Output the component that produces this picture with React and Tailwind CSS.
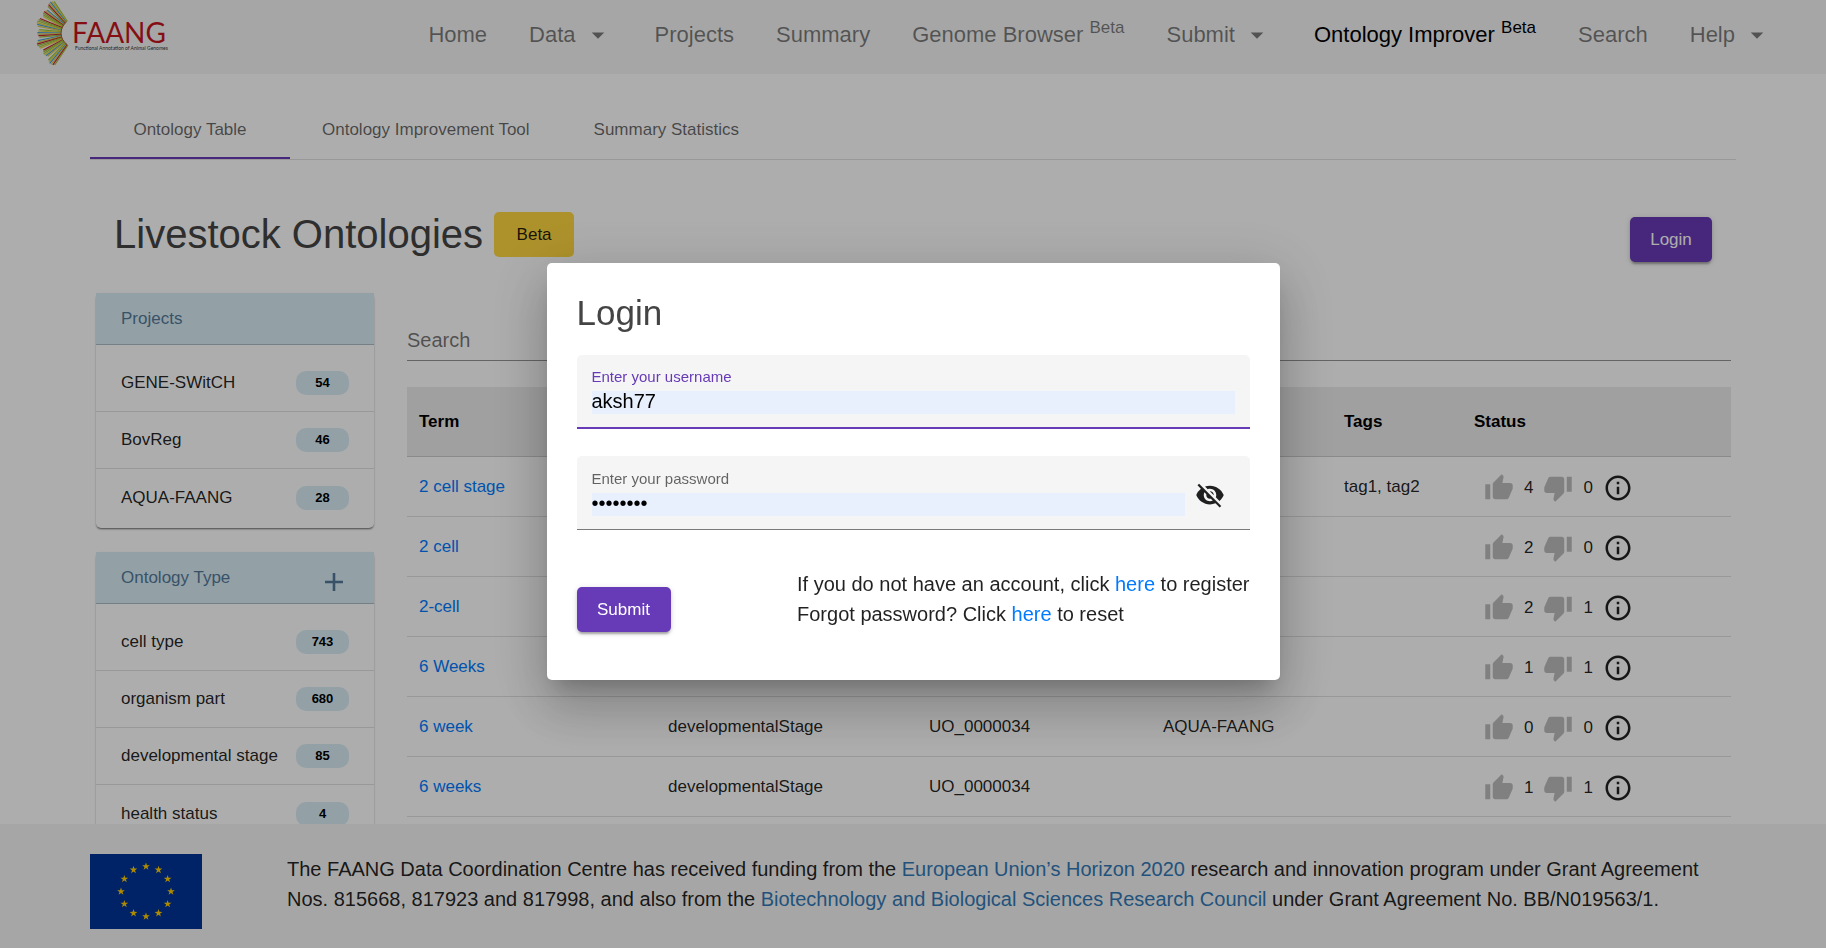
import { MdThumbUp, MdThumbDown, MdInfoOutline, MdVisibilityOff, MdArrowDropDown } from "react-icons/md";

const NAV = [
  { label: "Home" },
  { label: "Data", menu: true },
  { label: "Projects" },
  { label: "Summary" },
  { label: "Genome Browser", beta: true },
  { label: "Submit", menu: true },
  { label: "Ontology Improver", beta: true, active: true },
  { label: "Search" },
  { label: "Help", menu: true },
];

const PROJECTS = [["GENE-SWitCH", 54], ["BovReg", 46], ["AQUA-FAANG", 28]];
const TYPES = [["cell type", 743], ["organism part", 680], ["developmental stage", 85], ["health status", 4]];

const ROWS = [
  { term: "2 cell stage", tags: "tag1, tag2", up: 4, down: 0 },
  { term: "2 cell", up: 2, down: 0 },
  { term: "2-cell", up: 2, down: 1 },
  { term: "6 Weeks", up: 1, down: 1 },
  { term: "6 week", type: "developmentalStage", id: "UO_0000034", project: "AQUA-FAANG", up: 0, down: 0 },
  { term: "6 weeks", type: "developmentalStage", id: "UO_0000034", up: 1, down: 1 },
];

const RAY_COLORS = ["#9cc53f", "#e0cf3a", "#4a9fd0", "#d8c850", "#c2272d", "#a3b53a"];
const FAN = { cx: 39, cy: 33, inner: 14, wedges: 7, perWedge: 6, from: 122, to: 241 };

// Seven tufts of six rays each, opening to the left around a common centre.
const RAYS = Array.from({ length: FAN.wedges * FAN.perWedge }, (_, i) => {
  const wedge = Math.floor(i / FAN.perWedge);
  const k = i % FAN.perWedge;
  const span = (FAN.to - FAN.from) / FAN.wedges;
  const mid = FAN.from + span * (wedge + 0.5);
  const offset = (k - 2.5) / FAN.perWedge;
  const innerAngle = ((mid + offset * span) * Math.PI) / 180;
  const outerAngle = ((mid + offset * span * 0.85 - 1) * Math.PI) / 180;
  const outer = 40 - Math.abs(offset) * 5 - (wedge % 2) * 2;
  return {
    x1: FAN.cx + FAN.inner * Math.cos(innerAngle),
    y1: FAN.cy - FAN.inner * Math.sin(innerAngle),
    x2: FAN.cx + outer * Math.cos(outerAngle),
    y2: FAN.cy - outer * Math.sin(outerAngle),
    color: RAY_COLORS[(k + wedge * 2) % RAY_COLORS.length],
  };
});

function Logo() {
  return (
    <a href="#home" aria-label="FAANG home" className="shrink-0">
      <svg width="140" height="68" viewBox="0 0 140 68">
        {RAYS.map((r, i) => (
          <line key={i} x1={r.x1} y1={r.y1} x2={r.x2} y2={r.y2} stroke={r.color} strokeWidth="1.2" />
        ))}
        <path d="M30.5 22A14 14 0 0 0 31 44.5" fill="none" stroke="#9a5a2a" strokeWidth="1" />
        <text x="36" y="43" fontFamily="Lato, sans-serif" fontSize="28" fill="#c4161f">FAANG</text>
        <text x="39" y="50" fontFamily="Lato, sans-serif" fontSize="5" fill="#333">Functional Annotation of Animal Genomes</text>
      </svg>
    </a>
  );
}

function Header() {
  return (
    <header className="flex h-[74px] shrink-0 items-start bg-[#f5f5f5] pl-9">
      <Logo />
      <nav className="ml-auto flex h-[69px] items-center gap-[42px] pr-[54px] text-[22px] leading-[30px] text-black/50">
        {NAV.map((n) => (
          <a key={n.label} href={"#" + n.label} className={n.active ? "flex items-center whitespace-nowrap text-black" : "flex items-center whitespace-nowrap"}>
            <span>
              {n.label}
              {n.beta && <> <sup className="text-[17px]">Beta</sup></>}
            </span>
            {n.menu && <MdArrowDropDown className="ml-[7px] size-[30px]" />}
          </a>
        ))}
      </nav>
    </header>
  );
}

function Tabs() {
  const base = "flex h-[59px] min-w-[200px] items-center justify-center border-b-2 px-8 pt-0.5 ";
  return (
    <div role="tablist" className="flex h-[60px] border-b border-black/12 text-[17px] text-black/60">
      <button role="tab" aria-selected="true" className={base + "border-[#673ab7]"}>Ontology Table</button>
      <button role="tab" aria-selected="false" className={base + "border-transparent"}>Ontology Improvement Tool</button>
      <button role="tab" aria-selected="false" className={base + "border-transparent"}>Summary Statistics</button>
    </div>
  );
}

function FilterCard({ title, items, expandable }) {
  return (
    <section className="rounded-[5px] pb-0.5 shadow-[0_2px_2px_-1px_rgba(0,0,0,0.4),0_1px_2px_rgba(0,0,0,0.25)]">
      <div className="flex h-[52px] items-center justify-between border-b border-black/20 bg-[#d9edf7] px-[25px] text-[17px] text-[#557a99]">
        <h2>{title}</h2>
        {expandable && (
          <button aria-label={"Show all of " + title} className="mt-2 mr-1.5">
            <svg width="18" height="18" viewBox="0 0 18 18" stroke="currentColor" strokeWidth="2.6">
              <path d="M9 0v18M0 9h18" />
            </svg>
          </button>
        )}
      </div>
      <ul className="pt-2.5">
        {items.map(([name, count]) => (
          <li key={name} className="flex h-[57px] items-center justify-between border-b border-black/12 px-[25px] text-[17px] text-black/87 last:border-b-0">
            <span className="whitespace-nowrap">{name}</span>
            <span className="flex h-6 w-[53px] items-center justify-center rounded-[10px] bg-[#d9edf7] text-[13px] font-bold text-black">{count}</span>
          </li>
        ))}
      </ul>
    </section>
  );
}

function OntologyTable() {
  return (
    <table className="w-full table-fixed border-collapse text-left text-[17px] text-black/87">
      <colgroup>
        <col className="w-[249px]" />
        <col className="w-[261px]" />
        <col className="w-[234px]" />
        <col className="w-[181px]" />
        <col className="w-[130px]" />
        <col />
      </colgroup>
      <thead>
        <tr className="h-[69px] border-b border-black/20 bg-[#ececec] text-black">
          <th className="px-3">Term</th>
          <th className="px-3"></th>
          <th className="px-3"></th>
          <th className="px-3"></th>
          <th className="px-3">Tags</th>
          <th className="px-3">Status</th>
        </tr>
      </thead>
      <tbody>
        {ROWS.map((r) => (
          <tr key={r.term} className="h-[60px] border-b border-black/12">
            <td className="px-3 pt-0.5"><a href="#term" className="text-[#007bff]">{r.term}</a></td>
            <td className="px-3 pt-0.5">{r.type}</td>
            <td className="px-3 pt-0.5">{r.id}</td>
            <td className="px-3 pt-0.5">{r.project}</td>
            <td className="px-3 pt-0.5 whitespace-nowrap">{r.tags}</td>
            <td className="px-3 pt-1">
              <div className="flex items-center gap-2.5 pl-2.5">
                <button aria-label="Upvote" className="text-black/26"><MdThumbUp className="size-[30px]" /></button>
                <span>{r.up}</span>
                <button aria-label="Downvote" className="text-black/26"><MdThumbDown className="size-[30px]" /></button>
                <span>{r.down}</span>
                <button aria-label="Details"><MdInfoOutline className="size-[30px]" /></button>
              </div>
            </td>
          </tr>
        ))}
      </tbody>
    </table>
  );
}

function EuFlag() {
  const star = Array.from({ length: 10 }, (_, i) => {
    const rad = i % 2 ? 1.6 : 4.1;
    const a = (i * Math.PI) / 5;
    return (rad * Math.sin(a)).toFixed(2) + "," + (-rad * Math.cos(a)).toFixed(2);
  }).join(" ");
  return (
    <svg role="img" aria-label="European Union flag" width="112" height="75" viewBox="0 0 112 75" className="shrink-0">
      <rect width="112" height="75" fill="#003399" />
      {Array.from({ length: 12 }, (_, i) => {
        const a = (i * Math.PI) / 6;
        return <polygon key={i} points={star} fill="#ffcc00" transform={`translate(${56 + 25 * Math.sin(a)} ${37.5 - 25 * Math.cos(a)})`} />;
      })}
    </svg>
  );
}

function Footer() {
  return (
    <footer className="flex h-[124px] shrink-0 items-start gap-[85px] bg-[#f5f5f5] px-[90px] pt-[30px] text-[20px] leading-[30px] text-black/87">
      <EuFlag />
      <p>
        The FAANG Data Coordination Centre has received funding from the{" "}
        <a href="#h2020" className="text-[#337ab7]">European Union’s Horizon 2020</a> research and innovation program under Grant Agreement Nos. 815668, 817923 and 817998, and also from the{" "}
        <a href="#bbsrc" className="text-[#337ab7]">Biotechnology and Biological Sciences Research Council</a> under Grant Agreement No. BB/N019563/1.
      </p>
    </footer>
  );
}

const RAISED = "rounded-[5px] bg-[#673ab7] text-[17px] text-white h-[45px] shadow-[0_4px_2px_-2px_rgba(0,0,0,0.2),0_2px_3px_rgba(0,0,0,0.14),0_1px_6px_rgba(0,0,0,0.12)]";

function LoginDialog() {
  return (
    <div className="fixed inset-0 flex items-center justify-center bg-black/32 pb-[5px]">
      <form
        role="dialog"
        aria-labelledby="login-title"
        onSubmit={(e) => e.preventDefault()}
        className="w-[733px] rounded-[5px] bg-white px-[30px] pt-[30px] pb-12 shadow-[0_14px_19px_-9px_rgba(0,0,0,0.2),0_30px_48px_4px_rgba(0,0,0,0.14),0_11px_58px_10px_rgba(0,0,0,0.12)]"
      >
        <h2 id="login-title" className="text-[35px] leading-10 text-[#444]">Login</h2>
        <div className="mt-[22px] rounded-t-[5px] border-b-2 border-[#673ab7] bg-[#f5f5f5] px-[15px] py-[13px]">
          <label htmlFor="user" className="block text-[15px] leading-[18px] text-[#673ab7]">Enter your username</label>
          <input id="user" type="text" defaultValue="aksh77" className="mt-[5px] block h-[23px] w-full bg-[#e8f0fe] pb-0.5 text-[20px] leading-[21px] text-black outline-none" />
        </div>
        <div className="mt-[27px] flex items-center rounded-t-[5px] border-b border-black/50 bg-[#f5f5f5] px-[15px] pt-[14px] pb-[13px]">
          <div className="flex-1">
            <label htmlFor="pass" className="block text-[15px] leading-[18px] text-black/60">Enter your password</label>
            <input id="pass" type="password" defaultValue="password" className="mt-[5px] block h-[23px] w-full bg-[#e8f0fe] pb-0.5 text-[20px] leading-[21px] text-black outline-none" />
          </div>
          <button type="button" aria-label="Show password" className="mr-2.5 ml-2.5 pt-1 text-black/87"><MdVisibilityOff className="size-[30px]" /></button>
        </div>
        <div className="mt-[39px] flex items-end justify-between text-[20px] leading-[30px] text-black/87">
          <button type="submit" className={RAISED + " mt-[18px] w-[94px]"}>Submit</button>
          <div className="self-start">
            <p>If you do not have an account, click <a href="#register" className="text-[#007bff]">here</a> to register</p>
            <p>Forgot password? Click <a href="#reset" className="text-[#007bff]">here</a> to reset</p>
          </div>
        </div>
      </form>
    </div>
  );
}

export default function App() {
  return (
    <div className="flex h-screen flex-col overflow-hidden bg-white font-['Liberation_Sans',Arial,sans-serif]">
      <Header />
      <main className="min-h-0 flex-1 overflow-hidden px-[90px] pt-[26px]">
        <Tabs />
        <div className="mt-[52px] flex items-start pr-6 pl-6">
          <h1 className="text-[40px] leading-[45px] text-[#444]">Livestock Ontologies</h1>
          <button className="ml-[11px] h-[45px] w-20 rounded-[5px] bg-[#ffd740] text-[17px] text-black/87">Beta</button>
          <button className={RAISED + " mt-[5px] ml-auto w-[82px]"}>Login</button>
        </div>
        <div className="mt-[31px] flex items-start gap-[33px] pr-[5px] pl-1.5">
          <aside className="flex w-[278px] shrink-0 flex-col gap-6">
            <FilterCard title="Projects" items={PROJECTS} />
            <FilterCard title="Ontology Type" items={TYPES} expandable />
          </aside>
          <div className="min-w-0 flex-1 pt-[27px]">
            <input aria-label="Search" placeholder="Search" className="mb-[26px] block h-[41px] w-full border-b border-black/42 text-[20px] text-black outline-none placeholder:text-black/55" />
            <OntologyTable />
          </div>
        </div>
      </main>
      <Footer />
      <LoginDialog />
    </div>
  );
}
